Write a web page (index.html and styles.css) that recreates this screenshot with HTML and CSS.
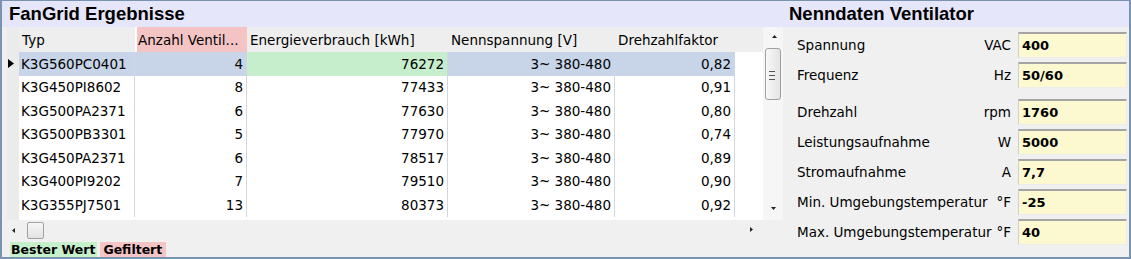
FILE: index.html
```html
<!DOCTYPE html>
<html lang="de">
<head>
<meta charset="utf-8">
<title>FanGrid Ergebnisse</title>
<link rel="stylesheet" href="styles.css">
</head>
<body>
<div class="window">
  <section class="left">
    <h1 class="title">FanGrid Ergebnisse</h1>
    <div class="grid">
      <div class="grid-main">
        <div class="grid-body">
          <div class="grow header">
            <div class="cell rowhdr"></div>
            <div class="cell hd">Typ</div>
            <div class="cell hd filtered">Anzahl Ventil...</div>
            <div class="cell hd">Energieverbrauch [kWh]</div>
            <div class="cell hd">Nennspannung [V]</div>
            <div class="cell hd">Drehzahlfaktor</div>
            <div class="cell hd blank"></div>
          </div>
          <div class="grow selected">
            <div class="cell rowhdr"><svg class="marker" width="6" height="9" viewBox="0 0 6 9"><polygon points="0,0 6,4.5 0,9" fill="#000"/></svg></div>
            <div class="cell txt">K3G560PC0401</div>
            <div class="cell num">4</div>
            <div class="cell num best">76272</div>
            <div class="cell num">3~ 380-480</div>
            <div class="cell num">0,82</div>
            <div class="cell blank"></div>
          </div>
          <div class="grow">
            <div class="cell rowhdr"></div>
            <div class="cell txt">K3G450PI8602</div>
            <div class="cell num">8</div>
            <div class="cell num">77433</div>
            <div class="cell num">3~ 380-480</div>
            <div class="cell num">0,91</div>
            <div class="cell blank"></div>
          </div>
          <div class="grow">
            <div class="cell rowhdr"></div>
            <div class="cell txt">K3G500PA2371</div>
            <div class="cell num">6</div>
            <div class="cell num">77630</div>
            <div class="cell num">3~ 380-480</div>
            <div class="cell num">0,80</div>
            <div class="cell blank"></div>
          </div>
          <div class="grow">
            <div class="cell rowhdr"></div>
            <div class="cell txt">K3G500PB3301</div>
            <div class="cell num">5</div>
            <div class="cell num">77970</div>
            <div class="cell num">3~ 380-480</div>
            <div class="cell num">0,74</div>
            <div class="cell blank"></div>
          </div>
          <div class="grow">
            <div class="cell rowhdr"></div>
            <div class="cell txt">K3G450PA2371</div>
            <div class="cell num">6</div>
            <div class="cell num">78517</div>
            <div class="cell num">3~ 380-480</div>
            <div class="cell num">0,89</div>
            <div class="cell blank"></div>
          </div>
          <div class="grow">
            <div class="cell rowhdr"></div>
            <div class="cell txt">K3G400PI9202</div>
            <div class="cell num">7</div>
            <div class="cell num">79510</div>
            <div class="cell num">3~ 380-480</div>
            <div class="cell num">0,90</div>
            <div class="cell blank"></div>
          </div>
          <div class="grow">
            <div class="cell rowhdr"></div>
            <div class="cell txt">K3G355PJ7501</div>
            <div class="cell num">13</div>
            <div class="cell num">80373</div>
            <div class="cell num">3~ 380-480</div>
            <div class="cell num">0,92</div>
            <div class="cell blank"></div>
          </div>
        </div>
        <div class="hscroll">
          <svg class="arrow-left" width="3" height="5" viewBox="0 0 3 5"><polygon points="3,0 0,2.5 3,5" fill="#222"/></svg>
          <div class="hthumb"></div>
          <div class="spacer"></div>
          <svg class="arrow-right" width="3" height="5" viewBox="0 0 3 5"><polygon points="0,0 3,2.5 0,5" fill="#222"/></svg>
        </div>
      </div>
      <div class="vscroll-col">
        <div class="vscroll">
          <svg class="arrow-up" width="5" height="3" viewBox="0 0 5 3"><polygon points="0,3 2.5,0 5,3" fill="#222"/></svg>
          <div class="vthumb">
            <svg class="grip" width="6" height="9" viewBox="0 0 6 9"><rect x="0" y="0" width="6" height="1" fill="#555"/><rect x="0" y="4" width="6" height="1" fill="#555"/><rect x="0" y="8" width="6" height="1" fill="#555"/></svg>
          </div>
          <div class="spacer"></div>
          <svg class="arrow-down" width="5" height="3" viewBox="0 0 5 3"><polygon points="0,0 5,0 2.5,3" fill="#222"/></svg>
        </div>
        <div class="corner"></div>
      </div>
    </div>
    <div class="legend">
      <span class="tag tag-best">Bester Wert</span>
      <span class="tag tag-filter">Gefiltert</span>
    </div>
  </section>
  <section class="right">
    <h2 class="title">Nenndaten Ventilator</h2>
    <div class="props">
      <div class="prop"><span class="plabel">Spannung</span><span class="punit">VAC</span><span class="pval">400</span></div>
      <div class="prop"><span class="plabel">Frequenz</span><span class="punit">Hz</span><span class="pval">50/60</span></div>
      <div class="prop prop-gap"><span class="plabel">Drehzahl</span><span class="punit">rpm</span><span class="pval">1760</span></div>
      <div class="prop"><span class="plabel">Leistungsaufnahme</span><span class="punit">W</span><span class="pval">5000</span></div>
      <div class="prop"><span class="plabel">Stromaufnahme</span><span class="punit">A</span><span class="pval">7,7</span></div>
      <div class="prop"><span class="plabel">Min. Umgebungstemperatur</span><span class="punit">°F</span><span class="pval">-25</span></div>
      <div class="prop"><span class="plabel">Max. Umgebungstemperatur</span><span class="punit">°F</span><span class="pval">40</span></div>
    </div>
  </section>
</div>
</body>
</html>
```

FILE: styles.css
```css
* { box-sizing: border-box; }
html, body { margin: 0; padding: 0; }
body {
  width: 1131px;
  height: 259px;
  overflow: hidden;
  font-family: "DejaVu Sans", Verdana, sans-serif;
  font-size: 13.5px;
  color: #000;
  background: #f0f0f0;
}
.window {
  width: 1131px;
  height: 259px;
  border-style: solid;
  border-color: #7894b0;
  border-width: 1px 2px 2px 2px;
  background: linear-gradient(#e6e6fa 0, #e6e6fa 26px, #f0f0f0 26px);
  display: flex;
}
.title {
  margin: 0;
  height: 26px;
  line-height: 26px;
  font-family: "Liberation Sans", Arial, sans-serif;
  font-weight: bold;
  font-size: 18.5px;
  color: #000;
  white-space: nowrap;
}
.left {
  flex: none;
  width: 783px;
  padding-left: 5px;
  display: flex;
  flex-direction: column;
}
.left .title { padding-left: 2px; }
.grid {
  display: flex;
  width: 776px;
  height: 213px;
}
.grid-main {
  width: 756px;
  display: flex;
  flex-direction: column;
}
.grid-body {
  height: 193px;
  background: linear-gradient(to right, #ebebeb 0, #ebebeb 12px, #fff 12px);
}
.grow {
  display: grid;
  grid-template-columns: 12px 116px 112px 201px 167px 120px 28px;
  height: 23.5px;
}
.grow.header { height: 25px; }
.cell {
  display: flex;
  align-items: center;
  white-space: nowrap;
  overflow: hidden;
  padding: 0 4px;
  border-right: 1px solid #d2d6de;
}
.cell.rowhdr {
  padding: 0 0 0 1px;
  border-right: none;
  background: #ebebeb;
}
.cell.blank { border-right: none; background: #fff; }
.cell.hd {
  background: #eeeeee;
  border-right: none;
  padding-left: 3px;
}
.cell.hd.filtered { background: #f4c4c4; margin-left: 2px; padding-left: 1px; }
.cell.txt { padding-left: 2px; }
.cell.num { justify-content: flex-end; padding-right: 3px; }
.grow.selected .cell { background: #c8d5e8; }
.grow.selected .cell.best { background: #c6edcc; }
.grow.selected .cell.blank { background: #fff; }
.grow.selected .cell.rowhdr { background: #ebebeb; }
.marker { display: block; }

.hscroll {
  height: 20px;
  background: #f0f0f0;
  display: flex;
  align-items: center;
  padding: 0 10px 0 5px;
}
.hthumb {
  width: 17px;
  height: 17px;
  margin-left: 12px;
  border: 1px solid #a2a2a2;
  border-radius: 2px;
  background: linear-gradient(#f7f7f7, #e2e2e2);
}
.spacer { flex: 1; }
.arrow-right { margin-top: -2px; }

.vscroll-col {
  width: 20px;
  display: flex;
  flex-direction: column;
}
.vscroll {
  height: 193px;
  background: #f6f6f6;
  display: flex;
  flex-direction: column;
  align-items: flex-start;
  padding: 8px 0 10px 0;
}
.arrow-up { margin-left: 9px; }
.arrow-down { margin-left: 8px; }
.vthumb {
  margin-top: 10px;
  margin-left: 2px;
  width: 16px;
  height: 52px;
  border: 1px solid #a0a0a0;
  border-radius: 3px;
  background: linear-gradient(to right, #f8f8f8, #e4e4e4);
  display: flex;
  align-items: center;
  padding-left: 3px;
}
.grip { display: block; margin-top: 2px; }
.corner { height: 20px; background: #f0f0f0; }

.legend {
  margin-top: 2px;
  margin-left: 3px;
  height: 15px;
  display: flex;
  gap: 3px;
  font-weight: bold;
  font-size: 12.5px;
  line-height: 15px;
}
.tag { padding: 0 2px 0 1px; color: #000; }
.tag-best { background: #c6efcb; }
.tag-filter { background: #f5c4c4; padding: 0 4px 0 3px; }

.right {
  flex: 1;
  display: flex;
  flex-direction: column;
  padding-left: 4px;
  padding-right: 2px;
}
.right .title { padding-left: 0; }
.props {
  padding-top: 5px;
  display: flex;
  flex-direction: column;
  gap: 4px;
  font-size: 13.5px;
}
.prop {
  display: flex;
  align-items: center;
  height: 26px;
  padding-left: 8px;
}
.prop.prop-gap { margin-top: 7px; }
.plabel { flex: 1; white-space: nowrap; }
.punit { margin-left: 0; margin-right: 7px; white-space: nowrap; }
.pval {
  width: 109px;
  height: 26px;
  flex: none;
  background: #fcf8d0;
  border-top: 2px solid #a4a4a4;
  border-left: 1px solid #cfcfcf;
  border-right: 1px solid #ebebeb;
  border-bottom: 1px solid #ececec;
  padding-left: 3px;
  display: flex;
  align-items: center;
  font-weight: bold;
  font-size: 13px;
}
```
